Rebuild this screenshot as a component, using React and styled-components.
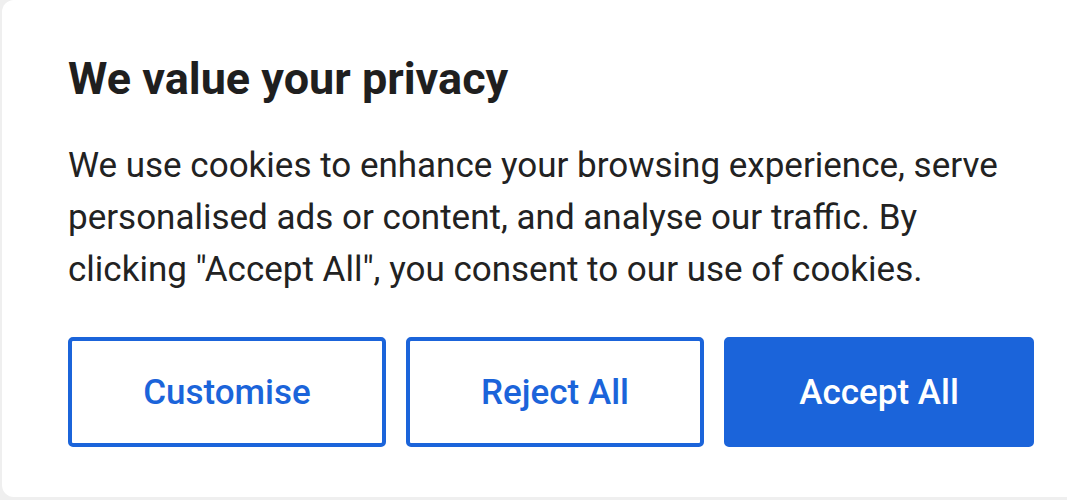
import styled, { createGlobalStyle } from 'styled-components';

const GlobalStyle = createGlobalStyle`
  html, body {
    margin: 0;
    padding: 0;
    background: #efefef;
    overflow: hidden;
  }
  body {
    font-family: Roboto, "Liberation Sans", sans-serif;
  }
`;

const Page = styled.div`
  width: 1067px;
  height: 500px;
  padding: 0 0 3px 2px;
  box-sizing: border-box;
  overflow: hidden;
`;

const Card = styled.section`
  background: #ffffff;
  border-radius: 12px;
  width: 1100px;
  height: 497px;
  box-sizing: border-box;
  padding: 52px 0 0 66px;
`;

const Inner = styled.div`
  width: 966px;
`;

const Title = styled.h2`
  margin: 0;
  font-size: 45px;
  font-weight: 700;
  line-height: 54px;
  color: #1f1f1f;
`;

const Text = styled.p`
  margin: 34px 0 0;
  font-size: 35px;
  line-height: 52px;
  color: #222222;
`;

const Actions = styled.div`
  display: flex;
  gap: 20px;
  margin-top: 41px;
`;

const Button = styled.button`
  flex: 1 1 auto;
  height: 110px;
  box-sizing: border-box;
  border-radius: 5px;
  border: 4px solid #1b64da;
  background: ${({ $primary }) => ($primary ? '#1b64da' : '#ffffff')};
  color: ${({ $primary }) => ($primary ? '#ffffff' : '#1b64da')};
  font-family: Roboto, "Liberation Sans", sans-serif;
  font-size: 35px;
  font-weight: 500;
  padding: 0;
  cursor: pointer;
`;

export default function App() {
  return (
    <>
      <GlobalStyle />
      <Page>
        <Card>
          <Inner>
            <Title>We value your privacy</Title>
            <Text>
              We use cookies to enhance your browsing experience, serve
              personalised ads or content, and analyse our traffic. By
              clicking "Accept All", you consent to our use of cookies.
            </Text>
            <Actions>
              <Button>Customise</Button>
              <Button>Reject All</Button>
              <Button $primary>Accept All</Button>
            </Actions>
          </Inner>
        </Card>
      </Page>
    </>
  );
}
